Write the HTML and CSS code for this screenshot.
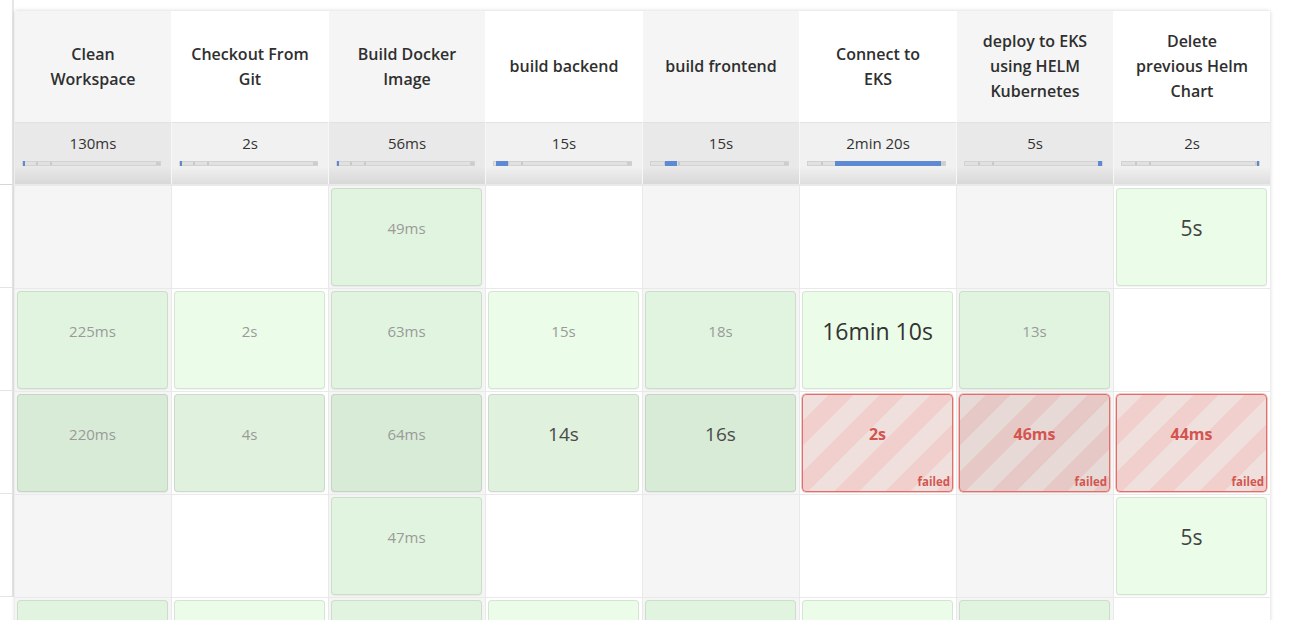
FILE: index.html
```html
<!DOCTYPE html>
<html lang="en">
<head>
<meta charset="utf-8">
<title>Stage View</title>
<link rel="stylesheet" href="styles.css">
</head>
<body>
<div class="page">
  <div class="history">
    <div class="history-head"></div>
    <div class="history-row"></div>
    <div class="history-row"></div>
    <div class="history-row failed"></div>
    <div class="history-row"></div>
    <div class="history-row"></div>
  </div>
  <div class="stage-view">
    <div class="grid names">
      <div class="name">Clean<br>Workspace</div>
      <div class="name">Checkout From<br>Git</div>
      <div class="name">Build Docker<br>Image</div>
      <div class="name">build backend</div>
      <div class="name">build frontend</div>
      <div class="name">Connect to<br>EKS</div>
      <div class="name">deploy to EKS<br>using HELM<br>Kubernetes</div>
      <div class="name">Delete<br>previous Helm<br>Chart</div>
    </div>
    <div class="grid durs">
      <div class="dur"><div class="avg">130ms</div><div class="bar"><i class="tick t1"></i><i class="tick t2"></i><i class="cap"></i><b class="fill" style="left:0;width:2px"></b></div></div>
      <div class="dur"><div class="avg">2s</div><div class="bar"><i class="tick t1"></i><i class="tick t2"></i><i class="cap"></i><b class="fill" style="left:0;width:2px"></b></div></div>
      <div class="dur"><div class="avg">56ms</div><div class="bar"><i class="tick t1"></i><i class="tick t2"></i><i class="cap"></i><b class="fill" style="left:0;width:2px"></b></div></div>
      <div class="dur"><div class="avg">15s</div><div class="bar"><i class="tick t1"></i><i class="tick t2"></i><i class="cap"></i><b class="fill" style="left:2px;width:12px"></b></div></div>
      <div class="dur"><div class="avg">15s</div><div class="bar"><i class="tick t1"></i><i class="tick t2"></i><i class="cap"></i><b class="fill" style="left:14px;width:12px"></b></div></div>
      <div class="dur"><div class="avg">2min 20s</div><div class="bar"><i class="tick t1"></i><i class="tick t2"></i><i class="cap"></i><b class="fill" style="left:27px;width:106px"></b></div></div>
      <div class="dur"><div class="avg">5s</div><div class="bar"><i class="tick t1"></i><i class="tick t2"></i><i class="cap"></i><b class="fill" style="left:133px;width:4px"></b></div></div>
      <div class="dur"><div class="avg">2s</div><div class="bar"><i class="tick t1"></i><i class="tick t2"></i><i class="cap"></i><b class="fill" style="left:135px;width:2px"></b></div></div>
    </div>
    <div class="rows">
      <div class="grid row">
        <div class="cell"></div>
        <div class="cell"></div>
        <div class="cell"><div class="box ok"><span class="t-sm">49ms</span></div></div>
        <div class="cell"></div>
        <div class="cell"></div>
        <div class="cell"></div>
        <div class="cell"></div>
        <div class="cell"><div class="box ok"><span class="t-lg">5s</span></div></div>
      </div>
      <div class="grid row">
        <div class="cell"><div class="box ok"><span class="t-sm">225ms</span></div></div>
        <div class="cell"><div class="box ok"><span class="t-sm">2s</span></div></div>
        <div class="cell"><div class="box ok"><span class="t-sm">63ms</span></div></div>
        <div class="cell"><div class="box ok"><span class="t-sm">15s</span></div></div>
        <div class="cell"><div class="box ok"><span class="t-sm">18s</span></div></div>
        <div class="cell"><div class="box ok"><span class="t-xl">16min 10s</span></div></div>
        <div class="cell"><div class="box ok"><span class="t-sm">13s</span></div></div>
        <div class="cell"></div>
      </div>
      <div class="grid row dim">
        <div class="cell"><div class="box ok"><span class="t-sm">220ms</span></div></div>
        <div class="cell"><div class="box ok"><span class="t-sm">4s</span></div></div>
        <div class="cell"><div class="box ok"><span class="t-sm">64ms</span></div></div>
        <div class="cell"><div class="box ok"><span class="t-md">14s</span></div></div>
        <div class="cell"><div class="box ok"><span class="t-md">16s</span></div></div>
        <div class="cell"><div class="box fail"><span class="t-fail">2s</span><span class="failed">failed</span></div></div>
        <div class="cell"><div class="box fail"><span class="t-fail">46ms</span><span class="failed">failed</span></div></div>
        <div class="cell"><div class="box fail"><span class="t-fail">44ms</span><span class="failed">failed</span></div></div>
      </div>
      <div class="grid row">
        <div class="cell"></div>
        <div class="cell"></div>
        <div class="cell"><div class="box ok"><span class="t-sm">47ms</span></div></div>
        <div class="cell"></div>
        <div class="cell"></div>
        <div class="cell"></div>
        <div class="cell"></div>
        <div class="cell"><div class="box ok"><span class="t-lg">5s</span></div></div>
      </div>
      <div class="grid row">
        <div class="cell"><div class="box ok"></div></div>
        <div class="cell"><div class="box ok"></div></div>
        <div class="cell"><div class="box ok"></div></div>
        <div class="cell"><div class="box ok"></div></div>
        <div class="cell"><div class="box ok"></div></div>
        <div class="cell"><div class="box ok"></div></div>
        <div class="cell"><div class="box ok"></div></div>
        <div class="cell"></div>
      </div>
    </div>
  </div>
</div>
</body>
</html>
```

FILE: styles.css
```css
html, body {
  margin: 0;
  padding: 0;
  background: #fff;
}
body {
  height: 620px;
  overflow: hidden;
  font-family: "Open Sans", "Noto Sans", sans-serif;
  color: #333;
}
.page {
  display: flex;
  align-items: flex-start;
}

/* left build-history strip */
.history {
  width: 12px;
  border-right: 2px solid #e6e6e6;
  display: flex;
  flex-direction: column;
}
.history-head {
  height: 185px;
  border-bottom: 1px solid #d6d6d6;
  box-sizing: border-box;
}
.history-row {
  height: 103px;
  border-bottom: 1px solid #e4e4e4;
  box-sizing: border-box;
}
.history-row.failed {
  background: #ecdcdb;
}

/* stage view */
.stage-view {
  margin-top: 11px;
  margin-left: 1px;
  box-shadow: 0 0 4px rgba(0, 0, 0, 0.18);
  background: #fff;
}
.grid {
  display: grid;
  grid-template-columns: repeat(8, 156px);
  column-gap: 1px;
}
.names {
  background: #fff;
}
.name {
  height: 111px;
  display: flex;
  align-items: center;
  justify-content: center;
  text-align: center;
  font-weight: 600;
  font-size: 16px;
  line-height: 25px;
  white-space: nowrap;
  color: #2f2f2f;
  background: #fff;
}
.name:nth-child(odd) {
  background: #f5f5f5;
}

.durs {
  background: #f7f7f7;
}
.dur {
  height: 62px;
  box-sizing: border-box;
  padding-top: 11px;
  text-align: center;
  background: linear-gradient(#f1f1f1 0, #f1f1f1 72%, #dedede 100%);
  box-shadow: inset 0 1px 0 #e2e2e2;
}
.dur:nth-child(odd) {
  background: linear-gradient(#e9e9e9 0, #e9e9e9 72%, #d8d8d8 100%);
}
.avg {
  font-size: 15px;
  line-height: 20px;
  color: #333;
}
.bar {
  position: relative;
  height: 3px;
  margin: 8px 10px 0 7px;
  border: 1px solid #d2d2d2;
  background: #e1e1e1;
}
.tick {
  position: absolute;
  top: 0;
  bottom: 0;
  width: 2px;
  background: #c9c9c9;
}
.tick.t1 { left: 13px; }
.tick.t2 { left: 27px; }
.cap {
  position: absolute;
  top: 0;
  bottom: 0;
  right: 0;
  width: 4px;
  background: #cdcdcd;
}
.fill {
  position: absolute;
  top: -1px;
  bottom: -1px;
  background: #5d8ad3;
}

/* body rows */
.rows {
  display: grid;
  row-gap: 1px;
  padding-top: 2px;
  background: #e9e9e9;
}
.row {
  background: #e9e9e9;
}
.cell {
  height: 102px;
  box-sizing: border-box;
  padding: 2px 3px 2px 2px;
  background: #fff;
}
.cell:nth-child(odd) {
  background: #f5f5f5;
}
.box {
  position: relative;
  height: 100%;
  box-sizing: border-box;
  border: 1px solid rgba(0, 0, 0, 0.09);
  border-radius: 4px;
  display: flex;
  align-items: center;
  justify-content: center;
  padding-bottom: 18px;
  box-shadow: 0 1px 1px rgba(0, 0, 0, 0.05);
}
.box.ok {
  background: #ebfce9;
}
.cell:nth-child(odd) .box.ok {
  background: #e1f4df;
}
.row.dim .box.ok {
  background: #e0f1dd;
}
.row.dim .cell:nth-child(odd) .box.ok {
  background: #d8ebd6;
}
.box.fail {
  border: 1px solid #de6f6a;
  box-shadow: 0 0 0 0.5px #e89490;
  background: repeating-linear-gradient(135deg, #f0e0dd 0, #f0e0dd 18px, #f0cfcd 18px, #f0cfcd 36px);
}
.cell:nth-child(odd) .box.fail {
  background: repeating-linear-gradient(135deg, #e7d9d6 0, #e7d9d6 18px, #e6c8c7 18px, #e6c8c7 36px);
}

.t-sm {
  font-size: 15px;
  color: #9a9a9a;
}
.t-md {
  font-size: 19px;
  color: #4a4a4a;
}
.t-lg {
  font-size: 21px;
  color: #444;
}
.t-xl {
  font-size: 23px;
  color: #333;
}
.t-fail {
  font-size: 16px;
  font-weight: 700;
  color: #d45550;
}
.failed {
  position: absolute;
  right: 2px;
  bottom: 2px;
  font-size: 11.5px;
  font-weight: 700;
  line-height: 14px;
  color: #d45550;
}
```
